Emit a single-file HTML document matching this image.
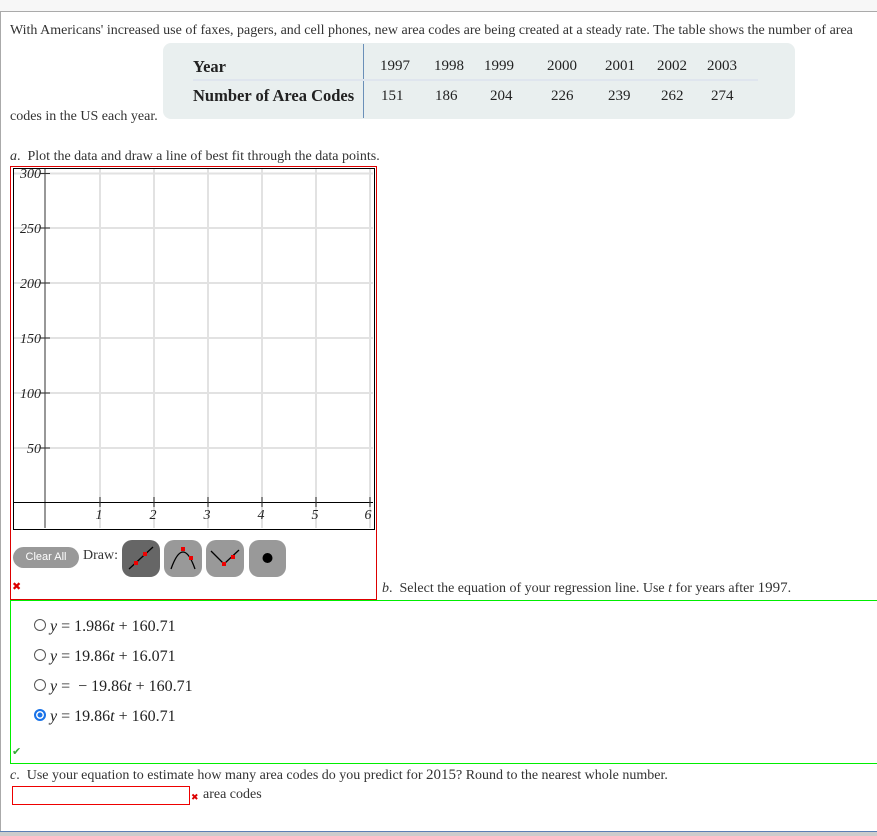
<!DOCTYPE html>
<html><head><meta charset="utf-8"><style>
body{margin:0;width:877px;height:836px;position:relative;background:#fff;font-family:"Liberation Serif",serif;color:#333;font-size:14px;overflow:hidden}
.a{position:absolute;white-space:nowrap}
.m{font-family:"Liberation Serif",serif;font-size:16px;color:#222}
.n{font-size:15px;color:#222}
.h{font-weight:bold;font-size:16.5px;color:#222}
</style></head><body>
<div class="a" style="left:0;top:0;width:877px;height:11px;background:#f7f7f7;border-bottom:1px solid #aaa"></div>
<div class="a" style="left:0;top:11px;width:1px;height:825px;background:#aaa"></div>
<div class="a" style="left:10px;top:23px;font-size:14px">With Americans' increased use of faxes, pagers, and cell phones, new area codes are being created at a steady rate. The table shows the number of area</div>
<div class="a" style="left:163px;top:43px;width:632px;height:76px;background:#e9efef;border-radius:8px"></div>
<div class="a" style="left:363px;top:44px;width:1px;height:74px;background:#6a8fb8"></div>
<div class="a" style="left:193px;top:79px;width:565px;height:2px;background:#dfe5ee"></div>
<div class="a h" style="left:193px;top:57px">Year</div>
<div class="a h" style="left:193px;top:86px">Number of Area Codes</div>
<div class="a n" style="left:380px;top:58px">1997</div>
<div class="a n" style="left:434px;top:58px">1998</div>
<div class="a n" style="left:484px;top:58px">1999</div>
<div class="a n" style="left:547px;top:58px">2000</div>
<div class="a n" style="left:605px;top:58px">2001</div>
<div class="a n" style="left:657px;top:58px">2002</div>
<div class="a n" style="left:707px;top:58px">2003</div>
<div class="a n" style="left:381px;top:88px">151</div>
<div class="a n" style="left:435px;top:88px">186</div>
<div class="a n" style="left:490px;top:88px">204</div>
<div class="a n" style="left:551px;top:88px">226</div>
<div class="a n" style="left:608px;top:88px">239</div>
<div class="a n" style="left:661px;top:88px">262</div>
<div class="a n" style="left:711px;top:88px">274</div>
<div class="a" style="left:10px;top:109px">codes in the US each year.</div>
<div class="a" style="left:10px;top:149px"><i>a</i>.&nbsp; Plot the data and draw a line of best fit through the data points.</div>
<div class="a" style="left:10px;top:166px;width:365px;height:432px;border:1px solid #d00"></div>
<svg class="a" style="left:0;top:0" width="877" height="836">
<g stroke="#e2e2e2" stroke-width="2">
<line x1="100" y1="169" x2="100" y2="528"/><line x1="154" y1="169" x2="154" y2="528"/><line x1="208" y1="169" x2="208" y2="528"/><line x1="262" y1="169" x2="262" y2="528"/><line x1="316" y1="169" x2="316" y2="528"/><line x1="370" y1="169" x2="370" y2="528"/>
<line x1="14" y1="173.5" x2="373" y2="173.5"/><line x1="14" y1="228" x2="373" y2="228"/><line x1="14" y1="283" x2="373" y2="283"/><line x1="14" y1="338" x2="373" y2="338"/><line x1="14" y1="393" x2="373" y2="393"/><line x1="14" y1="448" x2="373" y2="448"/>
</g>
<line x1="45" y1="169" x2="45" y2="528" stroke="#777" stroke-width="1.5"/>
<line x1="14" y1="502.5" x2="373" y2="502.5" stroke="#000" stroke-width="1"/>
<rect x="13.5" y="168.5" width="361" height="361" fill="none" stroke="#000"/>
<g stroke="#333"><line x1="40" y1="173.5" x2="50" y2="173.5"/><line x1="40" y1="228" x2="50" y2="228"/><line x1="40" y1="283" x2="50" y2="283"/><line x1="40" y1="338" x2="50" y2="338"/><line x1="40" y1="393" x2="50" y2="393"/><line x1="40" y1="448" x2="50" y2="448"/>
<line x1="100" y1="497" x2="100" y2="507"/><line x1="154" y1="497" x2="154" y2="507"/><line x1="208" y1="497" x2="208" y2="507"/><line x1="262" y1="497" x2="262" y2="507"/><line x1="316" y1="497" x2="316" y2="507"/><line x1="370" y1="497" x2="370" y2="507"/></g>
<g font-family="Liberation Serif" font-style="italic" font-size="14" fill="#222" text-anchor="end">
<text x="41" y="178">300</text><text x="41" y="233">250</text><text x="41" y="288">200</text><text x="41" y="343">150</text><text x="41" y="398">100</text><text x="41" y="453">50</text></g>
<g font-family="Liberation Serif" font-style="italic" font-size="14" fill="#222" text-anchor="middle">
<text x="99" y="519">1</text><text x="153" y="519">2</text><text x="207" y="519">3</text><text x="261" y="519">4</text><text x="315" y="519">5</text><text x="368" y="519">6</text></g>
<rect x="122" y="540" width="38" height="37" rx="10" fill="#666"/>
<line x1="129" y1="569" x2="153" y2="547" stroke="#000" stroke-width="1.3"/><rect x="134" y="561" width="4" height="4" fill="#e00"/><rect x="143" y="552" width="4" height="4" fill="#e00"/>
<rect x="164" y="540" width="38" height="37" rx="10" fill="#999"/>
<path d="M171 569 Q183 535 195 569" fill="none" stroke="#000" stroke-width="1.3"/><rect x="181" y="547" width="4" height="4" fill="#e00"/><rect x="189" y="556" width="4" height="4" fill="#e00"/>
<rect x="206" y="540" width="38" height="37" rx="10" fill="#999"/>
<path d="M211 551 L224 564 L239 550" fill="none" stroke="#000" stroke-width="1.3"/><rect x="222" y="562" width="4" height="4" fill="#e00"/><rect x="231" y="555" width="4" height="4" fill="#e00"/>
<rect x="249" y="540" width="37" height="37" rx="10" fill="#999"/><circle cx="267.5" cy="558" r="5" fill="#000"/>
<text x="12" y="590" font-size="11" fill="#d00" font-family="DejaVu Sans">✖</text>
<text x="12" y="755" font-size="11" fill="#3a3" font-family="DejaVu Sans">✔</text>
<text x="191" y="800" font-size="9" fill="#d00" font-family="DejaVu Sans">✖</text>
</svg>
<div class="a" style="left:13px;top:547px;width:66px;height:21px;border-radius:11px;background:#999;color:#fff;font-family:'Liberation Sans',sans-serif;font-size:11px;line-height:21px;text-align:center">Clear All</div>
<div class="a" style="left:83px;top:548px;font-size:14px">Draw:</div>
<div class="a" style="left:382px;top:580px"><i>b</i>.&nbsp; Select the equation of your regression line. Use <i>t</i> for years after <span style="font-size:15px">1997</span>.</div>
<div class="a" style="left:10px;top:600px;width:867px;height:162px;border-top:1px solid #0e0;border-left:1px solid #0e0;border-bottom:1px solid #0e0"></div>
<div class="a m" style="left:34px;top:618px"><span style="display:inline-block;width:10px;height:10px;border:1px solid #555;border-radius:50%;vertical-align:0"></span> <i>y</i> = 1.986<i>t</i> + 160.71</div>
<div class="a m" style="left:34px;top:648px"><span style="display:inline-block;width:10px;height:10px;border:1px solid #555;border-radius:50%;vertical-align:0"></span> <i>y</i> = 19.86<i>t</i> + 16.071</div>
<div class="a m" style="left:34px;top:678px"><span style="display:inline-block;width:10px;height:10px;border:1px solid #555;border-radius:50%;vertical-align:0"></span> <i>y</i> = &nbsp;− 19.86<i>t</i> + 160.71</div>
<div class="a m" style="left:34px;top:708px"><span style="display:inline-block;width:8px;height:8px;border:2px solid #1a73e8;background:#1a73e8;box-shadow:inset 0 0 0 1.5px #fff;border-radius:50%;vertical-align:0"></span> <i>y</i> = 19.86<i>t</i> + 160.71</div>
<div class="a" style="left:10px;top:767px"><i>c</i>.&nbsp; Use your equation to estimate how many area codes do you predict for <span style="font-size:15px">2015</span>? Round to the nearest whole number.</div>
<div class="a" style="left:12px;top:786px;width:176px;height:17px;border:1px solid #e00"></div>
<div class="a" style="left:203px;top:787px;font-size:14px">area codes</div>
<div class="a" style="left:0;top:831px;width:877px;height:1px;background:#5b7fb5"></div>
<div class="a" style="left:0;top:832px;width:877px;height:4px;background:#ccc"></div>
</body></html>
